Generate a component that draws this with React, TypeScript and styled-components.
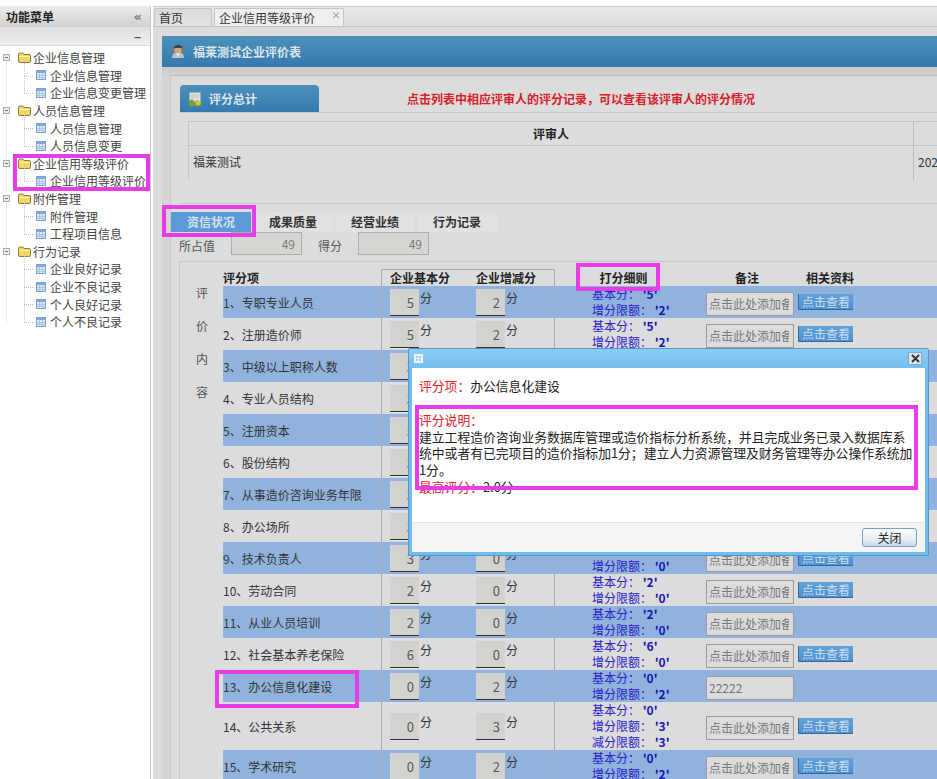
import React from "react";
import styled, { createGlobalStyle } from "styled-components";

const Global = createGlobalStyle`
  html, body { margin: 0; padding: 0; background: #fff; }
  body { font-family: "Noto Sans CJK SC", "Noto Sans", sans-serif; font-size: 12px; color: #333; }
  * { box-sizing: border-box; }
`;

const Page = styled.div`
  position: relative;
  width: 937px;
  height: 779px;
  overflow: hidden;
  display: flex;
  padding-top: 6px;
  background: #fff;
`;

const Sidebar = styled.aside`
  width: 151px;
  flex: none;
  background: #fff;
  border-right: 1px solid #c4c4c4;
  display: flex;
  flex-direction: column;
`;
const SideTitle = styled.div`
  height: 21px;
  display: flex;
  align-items: center;
  justify-content: space-between;
  padding: 0 8px 0 6px;
  background: linear-gradient(#ececec, #d0d0d0);
  color: #222;
  font-weight: 700;
  font-size: 12px;
`;
const Collapse = styled.span`
  color: #777;
  font-size: 13px;
  font-weight: 700;
  font-family: "DejaVu Sans", sans-serif;
`;
const SideTool = styled.div`
  height: 19px;
  display: flex;
  align-items: center;
  justify-content: flex-end;
  padding-right: 9px;
  background: linear-gradient(#dedede, #efefef);
  border-bottom: 1px solid #ddd;
  color: #555;
  font-weight: 700;
`;
const Tree = styled.div`
  padding-top: 3px;
  position: relative;
  &::before {
    content: "";
    position: absolute;
    left: 6px;
    top: 16px;
    height: 262px;
    border-left: 1px dotted #dcdcdc;
  }
`;
const TreeParent = styled.div`
  position: relative;
  height: 17.6px;
  display: flex;
  align-items: center;
  padding-left: 3px;
  color: #444;
  font-size: 12px;
  white-space: nowrap;
  svg { flex: none; }
`;
const TreeChild = styled(TreeParent)`
  padding-left: 36px;
  &::before {
    content: "";
    position: absolute;
    left: 24px;
    top: 9px;
    width: 9px;
    border-top: 1px dotted #c4c4c4;
  }
  &::after {
    content: "";
    position: absolute;
    left: 24px;
    top: -8px;
    height: 17px;
    border-left: 1px dotted #c4c4c4;
  }
`;
const FolderGap = styled.span`
  width: 2px;
  flex: none;
`;

const MinusBox = () => (
  <svg width="7" height="7" viewBox="0 0 7 7" style={{ marginRight: 8 }}>
    <rect x="0.5" y="0.5" width="6" height="6" fill="#eee" stroke="#aaa" />
    <path d="M2 3.5h3" stroke="#777" />
  </svg>
);
const Folder = () => (
  <svg width="13" height="11" viewBox="0 0 13 11">
    <path d="M.5 2.5 Q.5 1 2 1h3l1 1.5h5q1.5 0 1.5 1.5v5q0 1.5-1.5 1.5H2Q.5 10.500 .5 9z" fill="#f6d860" stroke="#8a7a4a" />
    <path d="M1 4.500h11" stroke="#fff2b0" />
  </svg>
);
const Leaf = () => (
  <svg width="10" height="10" viewBox="0 0 10 10" style={{ marginRight: 4 }}>
    <rect x="0.500" y="0.500" width="9" height="9" fill="#dce8f6" stroke="#7ba3d2" />
    <rect x="1" y="1" width="8" height="2" fill="#7faadc" />
    <path d="M1 5.500h8M1 7.500h8M3.500 3v6M6.500 3v6" stroke="#9fbfe2" strokeWidth="0.800" />
  </svg>
);

const Main = styled.main`
  flex: 1;
  min-width: 0;
  margin-left: 2px;
  display: flex;
  flex-direction: column;
  background: #dcdcdc;
  overflow: hidden;
`;
const TabBar = styled.div`
  height: 21px;
  flex: none;
  display: flex;
  align-items: flex-end;
  gap: 2px;
  padding-left: 1px;
  background: linear-gradient(#e9e9eb, #dcdcde);
  border-top: 1px solid #c8c8c8;
  border-bottom: 1px solid #c2c2c2;
`;
const PageTab = styled.div<{ $active?: boolean }>`
  position: relative;
  width: ${(p) => (p.$active ? 130 : 58)}px;
  height: 18px;
  padding-left: 4px;
  display: flex;
  align-items: center;
  color: #333;
  font-size: 12px;
  border: 1px solid #c4c4c4;
  border-bottom: none;
  border-radius: 2px 2px 0 0;
  background: ${(p) => (p.$active ? "#efefef" : "linear-gradient(#dadada, #e2e2e2)")};
`;
const TabClose = styled.span`
  position: absolute;
  right: 2px;
  top: 0;
  color: #888;
  font-size: 10px;
  line-height: 12px;
`;
const Content = styled.div`
  flex: 1;
  min-height: 0;
  padding: 9px 0 0 9px;
`;
const BlueBar = styled.div`
  height: 31px;
  display: flex;
  align-items: center;
  gap: 8px;
  padding-left: 9px;
  background: linear-gradient(#4c91ba, #3579b0);
  color: #dfe6ea;
  font-weight: 700;
  font-size: 12px;
`;
const BodyWrap = styled.div`
  padding: 8px 0 0 8px;
  background: linear-gradient(#cbcbcb, #d4d4d4 12px);
`;
const Panel = styled.div`
  background: #dcdcdc;
  border-top: 1px solid #bdbdbd;
  border-left: 1px solid #c8c8c8;
  padding-top: 9px;
`;
const SectionHead = styled.div`
  height: 28px;
  display: flex;
  margin-left: 9px;
  border-bottom: 1px solid #c6c6c6;
`;
const SectionTab = styled.div`
  width: 139px;
  height: 27px;
  display: flex;
  align-items: center;
  gap: 8px;
  padding-left: 9px;
  border-radius: 4px 4px 0 0;
  background: linear-gradient(#4c91ba, #3579b0);
  color: #dfe6ea;
  font-weight: 700;
`;
const Notice = styled.div`
  margin-left: 88px;
  line-height: 27px;
  color: #d8202a;
  font-weight: 700;
  white-space: nowrap;
  font-size: 12px;
`;
const ReviewTable = styled.div`
  margin: 8px 0 0 17px;
  display: grid;
  grid-template-columns: 725px 1fr;
  grid-template-rows: 24px 34px;
  border-top: 1px solid #c2c2c2;
  border-left: 1px solid #c6c6c6;
  color: #333;
`;
const ReviewHead = styled.div`
  display: flex;
  align-items: center;
  justify-content: center;
  font-weight: 700;
  color: #222;
  border-right: 1px solid #bbb;
  border-bottom: 1px solid #c2c2c2;
`;
const ReviewCell = styled.div`
  display: flex;
  align-items: center;
  padding: 0 0 3px 4px;
  border-right: 1px solid #bbb;
`;
const ReviewLast = styled.div`
  display: flex;
  align-items: center;
  padding: 0 0 3px 4px;
`;
const ReviewEnd = styled.div`
  border-bottom: 1px solid #c2c2c2;
`;
const Rule = styled.div`
  margin: 23px 0 0 8px;
  border-top: 1px solid #c6c6c6;
`;
const Tabs = styled.div`
  margin-top: 8px;
  display: flex;
  gap: 2px;
  height: 20px;
`;
const ScoreTab = styled.div<{ $active?: boolean }>`
  width: 80px;
  display: flex;
  align-items: center;
  justify-content: center;
  padding-bottom: 2px;
  font-weight: 700;
  font-size: 12px;
  color: ${(p) => (p.$active ? "#d3e3f2" : "#333")};
  background: ${(p) => (p.$active ? "#5b9ad6" : "#e1e1e1")};
`;
const StatRow = styled.div`
  height: 23px;
  display: flex;
  align-items: center;
  padding-left: 8px;
  color: #555;
`;
const StatLabel = styled.span<{ $w: number }>`
  width: ${(p) => p.$w}px;
  padding-top: 4px;
  flex: none;
`;
const StatInput = styled.input`
  width: 71px;
  height: 23px;
  margin-right: 16px;
  padding: 0 6px;
  text-align: right;
  font: inherit;
  color: #777;
  background: #d6d6d2;
  border: 1px solid #aeaeae;
`;
const ScoreBox = styled.div`
  margin: 6px 0 0 8px;
  display: flex;
  border-top: 1px solid #c8c8c8;
  border-left: 1px solid #c8c8c8;
`;
const SideLabels = styled.div`
  width: 43px;
  flex: none;
  padding: 23px 0 0 16px;
  display: flex;
  flex-direction: column;
  gap: 17px;
  color: #555;
  line-height: 16px;
`;
const Rows = styled.div`
  flex: 1;
  min-width: 0;
`;
const HeadRow = styled.div`
  height: 24px;
  display: grid;
  grid-template-columns: 158px 95px 79px 151px 92px 1fr;
  font-weight: 700;
  line-height: 16px;
  color: #222;
`;
const HeadName = styled.div`
  padding-top: 8px;
`;
const HeadBase = styled.div`
  margin-top: 7px;
  padding-left: 8px;
  border-top: 1px solid #aaa;
  border-left: 1px solid #aaa;
  white-space: nowrap;
`;
const HeadInc = styled.div`
  margin-top: 7px;
  border-top: 1px solid #aaa;
  border-right: 1px solid #aaa;
  white-space: nowrap;
`;
const HeadCenter = styled.div`
  text-align: center;
  padding-top: 8px;
`;
const HeadDetail = styled(HeadCenter)`
  padding-right: 14px;
`;
const HeadRemark = styled(HeadCenter)`
  padding-right: 10px;
`;
const HeadFiles = styled(HeadCenter)`
  text-align: left;
  padding-left: 8px;
`;
const Row = styled.div<{ $odd: boolean; $tall?: boolean }>`
  height: ${(p) => (p.$tall ? 48 : 32)}px;
  display: grid;
  grid-template-columns: 158px 95px 79px 151px 92px 1fr;
  align-items: center;
  background: ${(p) => (p.$odd ? "#8fb3dc" : "#dcdcdc")};
  color: #333;
`;
const NameCell = styled.div`
  white-space: nowrap;
`;
const ScoreCell = styled.div<{ $divider?: boolean }>`
  height: 100%;
  display: flex;
  align-items: center;
  padding-left: ${(p) => (p.$divider ? 8 : 0)}px;
  border-left: ${(p) => (p.$divider ? "1px solid #aaa" : "none")};
  border-right: ${(p) => (p.$divider ? "none" : "1px solid #aaa")};
`;
const ScoreInput = styled.input`
  width: 29px;
  height: 27px;
  margin-top: 1px;
  padding: 0 5px 0 0;
  text-align: right;
  font: inherit;
  font-size: 13px;
  color: #555;
  background: #d2d2ce;
  border: none;
  border-bottom: 1px solid #333;
  outline: none;
`;
const Unit = styled.span`
  margin: 0 0 9px 1px;
  color: #333;
`;
const DetailCell = styled.div`
  padding-left: 37px;
  line-height: 16px;
  color: #2a22c8;
  white-space: nowrap;
  b { color: #1a14b4; }
`;
const RemarkInput = styled.input`
  width: 88px;
  height: 24px;
  margin-top: 4px;
  padding: 0 4px 2px 2px;
  font: inherit;
  color: #777;
  background: #dcdcdc;
  border: 1px solid #9c9c9c;
  outline: none;
`;
const LookButton = styled.button`
  width: 55px;
  height: 16px;
  padding: 0;
  border: none;
  border-bottom: 1px solid #2e6ba6;
  border-left: 1px solid #2e6ba6;
  background: linear-gradient(#62a1da, #4f8fcc);
  color: #c9dff2;
  font: inherit;
  line-height: 15px;
  display: block;
`;

const Modal = styled.div`
  position: absolute;
  left: 408px;
  top: 348px;
  width: 521px;
  height: 208px;
  padding: 0 3px 3px;
  display: flex;
  flex-direction: column;
  background: linear-gradient(#8ccdf5, #72bdee 20px);
  border: 1px solid #4f98cf;
  border-radius: 2px;
`;
const ModalBar = styled.div`
  height: 19px;
  flex: none;
  display: flex;
  align-items: center;
  justify-content: space-between;
  padding: 0 3px 0 2px;
`;
const CloseBox = styled.span`
  width: 14px;
  height: 13px;
  display: flex;
  align-items: center;
  justify-content: center;
  background: #d8e6f0;
  border: 1px solid #8aa6bc;
`;
const ModalBody = styled.div`
  flex: 1;
  min-height: 0;
  background: #fff;
  padding: 8px 6px 0 7px;
  font-size: 12.8px;
  line-height: 16.7px;
  color: #222;
`;
const ItemLine = styled.div`
  height: 26px;
  padding-top: 2px;
  border-bottom: 1px solid #e8e8e8;
  margin-bottom: 10px;
`;
const RedText = styled.span`
  color: #e0202a;
`;
const Explain = styled.div`
  width: 498px;
`;
const ModalFoot = styled.div`
  height: 30px;
  flex: none;
  display: flex;
  align-items: center;
  justify-content: flex-end;
  padding: 0 8px 0 0;
  background: #f4f4f4;
  border-top: 1px solid #e4e4e4;
`;
const CloseButton = styled.button`
  width: 55px;
  height: 19px;
  padding: 0;
  font: inherit;
  font-size: 12px;
  line-height: 16px;
  color: #222;
  background: linear-gradient(#fafcfe, #e8eef6 60%, #c4d8ee);
  border: 1px solid #7f9fbf;
  border-radius: 3px;
`;
const Highlight = styled.div<{ $x: number; $y: number; $w: number; $h: number }>`
  position: absolute;
  left: ${(p) => p.$x}px;
  top: ${(p) => p.$y}px;
  width: ${(p) => p.$w}px;
  height: ${(p) => p.$h}px;
  border: 4px solid #e93ce9;
  pointer-events: none;
`;

const tree = [
  { name: "企业信息管理", kids: ["企业信息管理", "企业信息变更管理"] },
  { name: "人员信息管理", kids: ["人员信息管理", "人员信息变更"] },
  { name: "企业信用等级评价", kids: ["企业信用等级评价"] },
  { name: "附件管理", kids: ["附件管理", "工程项目信息"] },
  { name: "行为记录", kids: ["企业良好记录", "企业不良记录", "个人良好记录", "个人不良记录"] },
];

type Item = { name: string; base: string; inc: string; dec?: string; note?: string; noFile?: boolean };
const items: Item[] = [
  { name: "专职专业人员", base: "5", inc: "2" },
  { name: "注册造价师", base: "5", inc: "2" },
  { name: "中级以上职称人数", base: "3", inc: "2" },
  { name: "专业人员结构", base: "3", inc: "0" },
  { name: "注册资本", base: "5", inc: "2" },
  { name: "股份结构", base: "3", inc: "0" },
  { name: "从事造价咨询业务年限", base: "3", inc: "2" },
  { name: "办公场所", base: "3", inc: "0" },
  { name: "技术负责人", base: "3", inc: "0" },
  { name: "劳动合同", base: "2", inc: "0" },
  { name: "从业人员培训", base: "2", inc: "0", noFile: true },
  { name: "社会基本养老保险", base: "6", inc: "0" },
  { name: "办公信息化建设", base: "0", inc: "2", note: "22222", noFile: true },
  { name: "公共关系", base: "0", inc: "3", dec: "3" },
  { name: "学术研究", base: "0", inc: "2" },
];

export default function App() {
  return (
    <Page>
      <Global />
      <Sidebar>
        <SideTitle>
          功能菜单
          <Collapse>«</Collapse>
        </SideTitle>
        <SideTool>−</SideTool>
        <Tree>
          {tree.map((g) => (
            <div key={g.name}>
              <TreeParent>
                <MinusBox />
                <Folder />
                <FolderGap />
                {g.name}
              </TreeParent>
              {g.kids.map((k) => (
                <TreeChild key={k}>
                  <Leaf />
                  {k}
                </TreeChild>
              ))}
            </div>
          ))}
        </Tree>
      </Sidebar>
      <Main>
        <TabBar>
          <PageTab>首页</PageTab>
          <PageTab $active>
            企业信用等级评价
            <TabClose>×</TabClose>
          </PageTab>
        </TabBar>
        <Content>
          <BlueBar>
            <svg width="14" height="15" viewBox="0 0 14 15">
              <path d="M1 14q0-6 6-6t6 6z" fill="#b9c2cc" />
              <path d="M5 9h4l-2 4z" fill="#eef2f6" />
              <circle cx="3.500" cy="6" r="2.500" fill="#8a7a60" />
              <circle cx="10.500" cy="6" r="2.500" fill="#8a7a60" />
              <circle cx="7" cy="6" r="3.500" fill="#c9a98a" />
              <path d="M3 4.500Q3 1 7 1t4 3.500Q7 3 3 4.500z" fill="#3c3a36" />
            </svg>
            福莱测试企业评价表
          </BlueBar>
          <BodyWrap>
            <Panel>
              <SectionHead>
                <SectionTab>
                  <svg width="12" height="14" viewBox="0 0 12 14">
                    <rect x="0.500" y="0.500" width="11" height="10" fill="#dbe3d2" />
                    <path d="M2 3h8M2 5h8" stroke="#b8c8b0" />
                    <path d="M0 14V9l3-2 3 3 2-2 4 3v3z" fill="#7a9e3a" />
                    <circle cx="9" cy="11" r="2.500" fill="#d8c040" />
                  </svg>
                  评分总计
                </SectionTab>
                <Notice>点击列表中相应评审人的评分记录，可以查看该评审人的评分情况</Notice>
              </SectionHead>
              <ReviewTable>
                <ReviewHead>评审人</ReviewHead>
                <ReviewEnd />
                <ReviewCell>福莱测试</ReviewCell>
                <ReviewLast>202</ReviewLast>
              </ReviewTable>
              <Rule />
              <Tabs>
                <ScoreTab $active>资信状况</ScoreTab>
                <ScoreTab>成果质量</ScoreTab>
                <ScoreTab>经营业绩</ScoreTab>
                <ScoreTab>行为记录</ScoreTab>
              </Tabs>
              <StatRow>
                <StatLabel $w={52}>所占值</StatLabel>
                <StatInput readOnly value="49" />
                <StatLabel $w={40}>得分</StatLabel>
                <StatInput readOnly value="49" />
              </StatRow>
              <ScoreBox>
                <SideLabels>
                  <span>评</span>
                  <span>价</span>
                  <span>内</span>
                  <span>容</span>
                </SideLabels>
                <Rows>
                  <HeadRow>
                    <HeadName>评分项</HeadName>
                    <HeadBase>企业基本分</HeadBase>
                    <HeadInc>企业增减分</HeadInc>
                    <HeadDetail>打分细则</HeadDetail>
                    <HeadRemark>备注</HeadRemark>
                    <HeadFiles>相关资料</HeadFiles>
                  </HeadRow>
                  {items.map((it, i) => (
                    <Row key={it.name} $odd={i % 2 === 0} $tall={!!it.dec}>
                      <NameCell>
                        {i + 1}、{it.name}
                      </NameCell>
                      <ScoreCell $divider>
                        <ScoreInput readOnly value={it.base} />
                        <Unit>分</Unit>
                      </ScoreCell>
                      <ScoreCell>
                        <ScoreInput readOnly value={it.inc} />
                        <Unit>分</Unit>
                      </ScoreCell>
                      <DetailCell>
                        <div>
                          基本分： <b>'{it.base}'</b>
                        </div>
                        <div>
                          增分限额： <b>'{it.inc}'</b>
                        </div>
                        {it.dec && (
                          <div>
                            减分限额： <b>'{it.dec}'</b>
                          </div>
                        )}
                      </DetailCell>
                      <div>
                        <RemarkInput readOnly value={it.note ?? "点击此处添加备注"} />
                      </div>
                      <div>{!it.noFile && <LookButton>点击查看</LookButton>}</div>
                    </Row>
                  ))}
                </Rows>
              </ScoreBox>
            </Panel>
          </BodyWrap>
        </Content>
      </Main>

      <Modal>
        <ModalBar>
          <svg width="9" height="9" viewBox="0 0 9 9">
            <rect width="9" height="9" fill="#eef6fc" />
            <path d="M2 2h2v2H2zM5 2h2v2H5zM2 5h2v2H2zM5 5h2v2H5z" fill="#a8cbe6" />
          </svg>
          <CloseBox>
            <svg width="9" height="9" viewBox="0 0 9 9">
              <path d="M1 1l7 7M8 1 1 8" stroke="#333" strokeWidth="1.800" />
            </svg>
          </CloseBox>
        </ModalBar>
        <ModalBody>
          <ItemLine>
            <RedText>评分项：</RedText>办公信息化建设
          </ItemLine>
          <Explain>
            <div>
              <RedText>评分说明：</RedText>
            </div>
            <div>
              建立工程造价咨询业务数据库管理或造价指标分析系统，并且完成业务已录入数据库系统中或者有已完项目的造价指标加1分；建立人力资源管理及财务管理等办公操作系统加1分。
            </div>
            <div>
              <RedText>最高评分：</RedText>2.0分
            </div>
          </Explain>
        </ModalBody>
        <ModalFoot>
          <CloseButton>关闭</CloseButton>
        </ModalFoot>
      </Modal>

      <Highlight $x={13} $y={154} $w={137} $h={37} />
      <Highlight $x={162} $y={205} $w={94} $h={32} />
      <Highlight $x={576} $y={263} $w={84} $h={28} />
      <Highlight $x={215} $y={670} $w={144} $h={38} />
      <Highlight $x={415} $y={405} $w={503} $h={85} />
    </Page>
  );
}
